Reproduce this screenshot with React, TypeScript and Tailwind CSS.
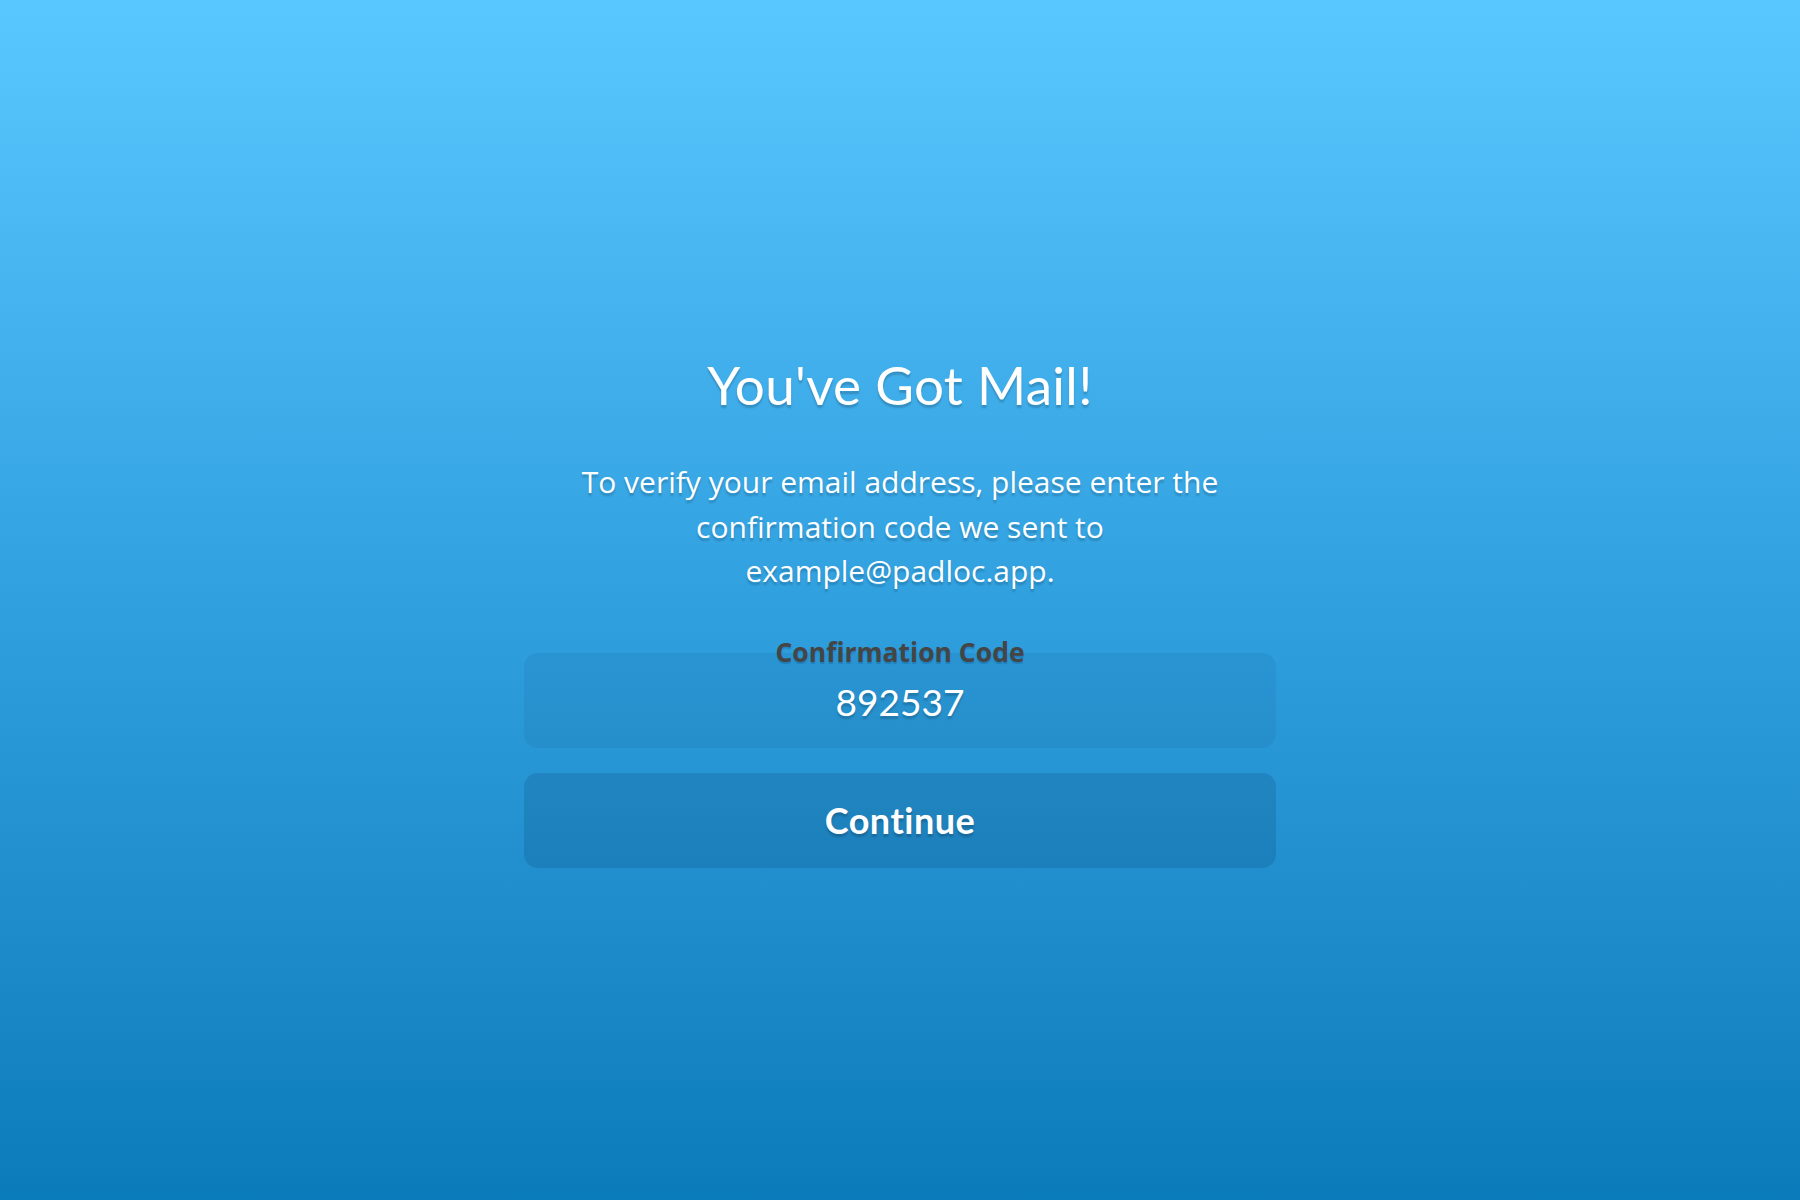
const shadow = "[text-shadow:0_3px_2px_rgba(0,0,0,0.18)]";

const App = () => {
    return (
        <div className="w-full h-[1200px] bg-gradient-to-b from-[#59c7ff] via-[#30a0df] to-[#0a7bba] font-['Lato','Noto_Sans',sans-serif] text-white">
            <div className="w-[752px] mx-auto pt-[352px] flex flex-col items-center">
                <h1 className={`text-[53px] leading-[66px] font-normal tracking-[0.3px] ${shadow}`}>You've Got Mail!</h1>
                <p className={`mt-[42px] font-['Open_Sans',sans-serif] text-[30px] leading-[44.5px] text-center ${shadow}`}>
                    To verify your email address, please enter the
                    <br />
                    confirmation code we sent to
                    <br />
                    example@padloc.app.
                </p>
                <div className="relative mt-[59px] w-full h-[95px] rounded-[14px] bg-[rgba(0,40,90,0.07)] flex items-center justify-center">
                    <span className="absolute -top-[18px] left-0 right-0 text-center font-['Open_Sans',sans-serif] text-[26.5px] leading-[34px] font-bold text-[#454545] [text-shadow:0_2px_1px_rgba(0,60,110,0.25)]">
                        Confirmation Code
                    </span>
                    <input
                        readOnly
                        value="892537"
                        className={`w-full h-full bg-transparent text-center text-[37px] pt-[2px] outline-none text-white ${shadow}`}
                    />
                </div>
                <button className={`mt-[25px] w-full h-[95px] rounded-[14px] bg-[rgba(0,40,80,0.15)] text-[36px] font-bold tracking-[0.5px] ${shadow}`}>
                    Continue
                </button>
            </div>
        </div>
    );
};

export default App;
